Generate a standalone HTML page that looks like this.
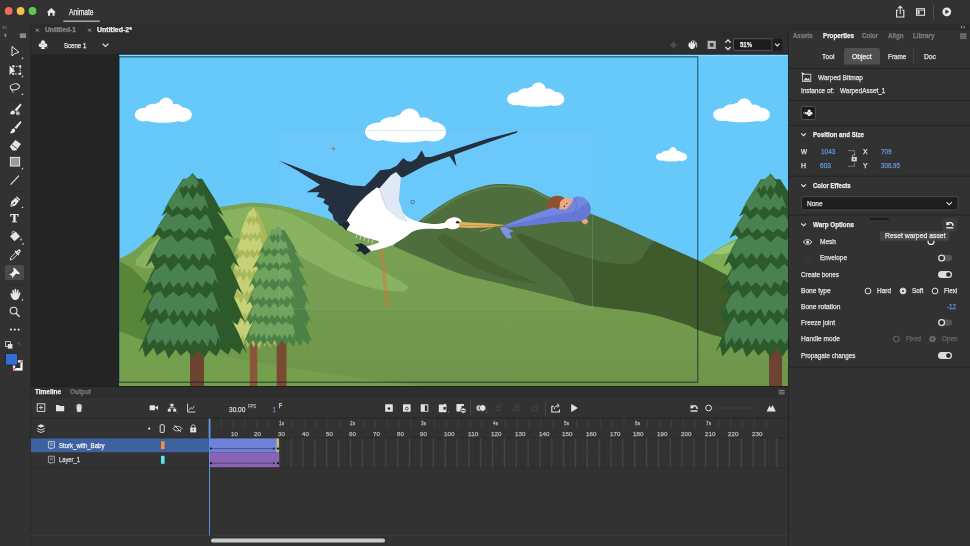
<!DOCTYPE html><html><head><meta charset="utf-8"><title>Animate</title><style>
*{box-sizing:border-box}
html,body{margin:0;padding:0}
body{width:970px;height:546px;position:relative;overflow:hidden;background:#323232;font-family:"Liberation Sans",sans-serif;}
.p{position:absolute}
.t{position:absolute;white-space:nowrap;line-height:12px;height:12px;transform-origin:0 50%;-webkit-text-stroke:0.25px currentColor;}
#txt{position:absolute;left:0;top:0;width:970px;height:546px;will-change:transform;}
svg{position:absolute;left:0;top:0}
</style></head><body>
<div class="p" style="left:0px;top:0px;width:970px;height:24px;background:#323232;"></div>
<div class="p" style="left:30px;top:24px;width:758px;height:12px;background:#2d2d2d;"></div>
<div class="p" style="left:30px;top:36px;width:758px;height:18px;background:#2e2e2e;border-top:1px solid #2a2a2a;"></div>
<div class="p" style="left:30px;top:53.5px;width:758px;height:332.5px;background:#242424;"></div>
<div class="p" style="left:0px;top:24px;width:31.4px;height:522px;background:#323232;border-right:1.8px solid #272727;"></div>
<div class="p" style="left:788px;top:24px;width:182px;height:522px;background:#323232;border-left:1px solid #262626;"></div>
<div class="p" style="left:31px;top:385.6px;width:757px;height:160.4px;background:#323232;border-top:1.2px solid #1f1f1f;"></div>
<div class="p" style="left:31px;top:386.8px;width:757px;height:11.6px;background:#2e2e2e;"></div>
<svg width="970" height="546" viewBox="0 0 970 546"><defs><clipPath id="artclip"><rect x="119.3" y="54.7" width="668.7" height="331.2"/></clipPath><linearGradient id="gnd" x1="0" y1="0" x2="0" y2="1"><stop offset="0" stop-color="#78a24f"/><stop offset="1" stop-color="#6f954a"/></linearGradient></defs>
<g clip-path="url(#artclip)">
<rect x="119" y="54" width="669" height="333" fill="#67c8fa"/>
<g fill="#ffffff">
<ellipse cx="163.2" cy="115.2" rx="25.1" ry="7.5"/>
<ellipse cx="143.8" cy="114.7" rx="9.1" ry="6.8"/>
<ellipse cx="182.7" cy="114.7" rx="9.1" ry="7.3"/>
<ellipse cx="153.5" cy="111.6" rx="9.7" ry="7.8"/>
<ellipse cx="166.1" cy="106.6" rx="7.7" ry="9.1"/>
<ellipse cx="175.8" cy="111.6" rx="8.0" ry="7.5"/>
<ellipse cx="160.4" cy="110.0" rx="8.0" ry="7.8"/>
</g>
<g fill="#ffffff">
<ellipse cx="405.5" cy="132.4" rx="35.6" ry="10.2"/>
<ellipse cx="378.0" cy="131.7" rx="13.0" ry="9.2"/>
<ellipse cx="433.0" cy="131.7" rx="13.0" ry="9.9"/>
<ellipse cx="391.7" cy="127.5" rx="13.8" ry="10.6"/>
<ellipse cx="409.6" cy="120.8" rx="10.9" ry="12.4"/>
<ellipse cx="423.3" cy="127.5" rx="11.3" ry="10.2"/>
<ellipse cx="401.4" cy="125.3" rx="11.3" ry="10.6"/>
</g>
<g fill="#ffffff">
<ellipse cx="535.6" cy="99.4" rx="25.2" ry="7.3"/>
<ellipse cx="516.2" cy="98.9" rx="9.2" ry="6.6"/>
<ellipse cx="555.1" cy="98.9" rx="9.2" ry="7.1"/>
<ellipse cx="525.9" cy="95.9" rx="9.7" ry="7.6"/>
<ellipse cx="538.5" cy="91.1" rx="7.7" ry="8.9"/>
<ellipse cx="548.3" cy="95.9" rx="8.0" ry="7.3"/>
<ellipse cx="532.8" cy="94.3" rx="8.0" ry="7.6"/>
</g>
<g fill="#ffffff">
<ellipse cx="671.5" cy="157.2" rx="13.6" ry="4.2"/>
<ellipse cx="661.0" cy="156.9" rx="5.0" ry="3.8"/>
<ellipse cx="682.0" cy="156.9" rx="5.0" ry="4.1"/>
<ellipse cx="666.2" cy="155.1" rx="5.3" ry="4.3"/>
<ellipse cx="673.0" cy="152.4" rx="4.2" ry="5.1"/>
<ellipse cx="678.3" cy="155.1" rx="4.3" ry="4.2"/>
<ellipse cx="670.0" cy="154.2" rx="4.3" ry="4.3"/>
</g>
<g fill="#ffffff">
<ellipse cx="741.5" cy="115.1" rx="25.1" ry="7.2"/>
<ellipse cx="722.1" cy="114.6" rx="9.1" ry="6.4"/>
<ellipse cx="760.9" cy="114.6" rx="9.1" ry="6.9"/>
<ellipse cx="731.8" cy="111.6" rx="9.7" ry="7.4"/>
<ellipse cx="744.4" cy="106.9" rx="7.7" ry="8.7"/>
<ellipse cx="754.0" cy="111.6" rx="8.0" ry="7.2"/>
<ellipse cx="738.6" cy="110.1" rx="8.0" ry="7.4"/>
</g>
<path d="M690,270 C705,258 715,250 730,242 C750,232 770,226 790,224 L790,385 L690,385Z" fill="#7fae56"/>
<path d="M712,254 C722,246 736,240 750,238 C745,248 730,256 712,254Z" fill="#9ac86f"/>
<path d="M392.0,247.0 C393.3,245.7 394.8,243.8 400.0,239.0 C405.2,234.2 413.7,225.1 423.0,218.0 C432.3,210.9 446.1,201.8 456.0,196.5 C465.9,191.2 474.7,188.6 482.4,186.5 C490.1,184.4 494.3,183.9 502.0,184.0 C509.7,184.1 520.9,184.9 528.6,187.0 C536.3,189.1 537.7,191.9 548.4,196.5 C559.1,201.1 580.9,209.7 593.0,214.6 C605.1,219.5 610.8,221.6 621.0,226.0 C631.2,230.4 641.1,235.2 654.0,241.0 C666.9,246.8 684.3,254.0 698.6,260.8 C712.9,267.6 724.8,274.6 740.0,282.0 C755.2,289.4 781.7,301.2 790.0,305.0 L790,385 L392,385Z" fill="#4b6b3a"/>
<path d="M423.0,220.2 C428.5,216.6 446.1,203.9 456.0,198.7 C465.9,193.4 474.7,190.8 482.4,188.7 C490.1,186.6 494.3,186.1 502.0,186.2 C509.7,186.3 520.9,187.1 528.6,189.2 C536.3,191.3 545.1,197.1 548.4,198.7" fill="none" stroke="#5e8348" stroke-width="1.5" stroke-linecap="round"/>
<path d="M644,254 L654,241 L698.6,260.8 L740,282 L790,305 L790,385 L560,385 L575,302 C572,292 566,285 561.6,279 C552,270 545,265 538.5,259 C530,251 522,243 515.4,234.4 L522,233.7 C530,237 538,240 545,242.7 C556,247 566,251 575,254 C585,257 594,260 601,261.5 C614,264 626,265 634,263.4 C640,261 643,258 644,254Z" fill="#3f5b2c"/>
<path d="M437,238 C448,252 470,268 500,277 C515,281 528,283 540,284 C522,276 500,268 480,255 C466,246 452,238 445,233Z" fill="#43602f"/>
<path d="M392,249 C420,262 460,276 520,291 L560,300 L560,385 L392,385Z" fill="#43602f"/>
<path d="M119.0,259.0 C121.7,257.5 128.6,254.6 135.0,250.0 C141.4,245.4 146.8,237.7 157.6,231.4 C168.4,225.1 186.3,216.6 200.0,212.0 C213.7,207.4 230.3,205.5 240.0,204.0 C249.7,202.5 251.3,202.8 258.0,203.0 C264.7,203.2 273.0,204.3 280.0,205.5 C287.0,206.7 291.6,208.1 300.0,210.4 C308.4,212.7 323.3,217.0 330.4,219.5 C337.5,222.0 336.7,223.2 342.5,225.5 C348.3,227.8 356.6,230.1 365.0,233.5 C373.4,236.9 383.3,241.8 393.0,246.0 C402.7,250.2 412.5,254.6 423.0,259.0 C433.5,263.4 445.0,268.7 456.0,272.4 C467.0,276.1 478.0,278.2 489.0,281.0 C500.0,283.8 511.0,286.3 522.0,289.0 C533.0,291.7 544.0,294.3 555.0,297.0 C566.0,299.7 577.0,303.3 588.0,305.4 C599.0,307.5 610.0,308.0 621.0,309.6 C632.0,311.2 643.0,312.4 654.0,315.0 C665.0,317.6 679.7,322.5 687.0,325.0 C694.3,327.5 692.3,328.0 698.0,330.0 C703.7,332.0 710.7,334.5 721.0,337.0 C731.3,339.5 748.5,342.8 760.0,345.0 C771.5,347.2 785.0,349.2 790.0,350.0 L790,386 L119,386Z" fill="url(#gnd)"/>
<path d="M136.0,259.0 C140.0,255.3 149.3,244.0 160.0,237.0 C170.7,230.0 186.7,221.8 200.0,217.0 C213.3,212.2 230.3,209.7 240.0,208.0 C249.7,206.3 251.3,206.7 258.0,207.0 C264.7,207.3 273.0,208.2 280.0,210.0 C287.0,211.8 292.5,214.0 300.0,218.0 C307.5,222.0 314.8,227.3 325.0,234.0 C335.2,240.7 348.5,250.2 361.0,258.0 C373.5,265.8 392.0,276.2 400.0,281.0 C408.0,285.8 407.5,286.0 409.0,287.0 L405.0,291.0 C403.7,291.1 402.2,291.9 397.0,291.5 C391.8,291.1 383.3,290.8 374.0,288.5 C364.7,286.2 350.9,281.7 341.0,277.7 C331.1,273.7 323.9,269.4 314.6,264.5 C305.3,259.6 294.4,252.4 285.0,248.0 C275.6,243.6 268.0,239.3 258.0,238.0 C248.0,236.7 238.0,236.7 225.0,240.0 C212.0,243.3 192.5,253.3 180.0,258.0 C167.5,262.7 157.3,266.8 150.0,268.0 C142.7,269.2 138.3,265.5 136.0,265.0Z" fill="#88b25e"/>
<path d="M119,261 L132,268 L143.4,280 L170,305 L215,340 L215,352 L139,339 L119,331Z" fill="#578639"/>
<path d="M119,331 L139,339 C200,352 300,372 430,387 L119,387Z" fill="#74a04d"/>
<g>
<rect x="249.8" y="329.3" width="7.5" height="57.7" fill="#8a5538"/>
<path d="M239.1,306.0 L267.9,306.0 L275.2,328.6 L279.5,345.1 L277.4,340.8 L276.2,347.0 L272.1,341.3 L270.5,347.8 L266.8,341.4 L264.8,346.7 L261.5,342.9 L259.2,349.3 L256.2,342.6 L253.5,347.6 L250.8,341.3 L247.8,348.2 L245.5,341.4 L242.2,347.9 L240.2,341.4 L236.5,346.4 L234.9,340.8 L230.8,348.0 L229.6,340.2 L227.5,345.1 L231.8,328.6Z" fill="#a9b85b" />
<path d="M240.6,306.0 L260.0,306.0 L264.4,323.8 L267.0,336.6 L265.5,332.0 L264.7,338.8 L261.7,333.8 L260.6,339.7 L258.0,333.5 L256.6,338.9 L254.2,334.9 L252.6,340.8 L250.4,334.3 L248.6,340.4 L246.7,333.6 L244.5,340.3 L242.9,333.4 L240.5,339.2 L239.1,333.2 L236.5,338.8 L235.4,332.4 L232.5,339.4 L231.6,333.0 L230.1,336.6 L234.0,323.8Z" fill="#c6d076" />
<path d="M239.9,284.9 L267.1,284.9 L274.4,306.1 L278.7,321.4 L276.4,317.7 L274.9,322.3 L270.6,317.0 L268.8,323.6 L264.9,318.2 L262.7,323.7 L259.2,318.7 L256.6,324.1 L253.5,319.1 L250.4,324.7 L247.8,318.6 L244.3,325.4 L242.1,318.1 L238.2,325.0 L236.4,317.2 L232.1,324.5 L230.6,316.8 L228.3,321.4 L232.6,306.1Z" fill="#a9b85b" />
<path d="M241.2,284.9 L259.6,284.9 L264.0,301.6 L266.6,313.7 L264.9,310.3 L263.9,316.2 L260.9,309.9 L259.6,317.0 L256.8,311.0 L255.2,316.9 L252.8,311.9 L250.9,317.4 L248.7,311.4 L246.5,316.1 L244.6,312.1 L242.2,317.3 L240.6,310.4 L237.9,314.9 L236.5,310.1 L233.5,315.1 L232.5,310.3 L230.8,313.7 L234.7,301.6Z" fill="#c6d076" />
<path d="M240.8,263.0 L266.2,263.0 L273.3,284.3 L277.4,299.7 L274.8,295.9 L273.1,302.2 L268.7,295.8 L266.5,300.9 L262.6,296.7 L260.0,301.2 L256.5,296.8 L253.5,302.1 L250.5,296.5 L247.0,303.8 L244.4,296.9 L240.5,303.4 L238.3,296.7 L233.9,300.3 L232.2,295.4 L229.6,299.7 L233.7,284.3Z" fill="#a9b85b" />
<path d="M242.0,263.0 L259.2,263.0 L263.5,280.0 L265.9,292.3 L264.1,289.3 L262.8,293.2 L259.8,289.6 L258.2,294.9 L255.5,290.5 L253.6,293.9 L251.1,289.7 L249.0,294.7 L246.8,289.6 L244.3,296.0 L242.5,290.1 L239.7,294.5 L238.1,289.4 L235.1,294.3 L233.8,288.5 L232.0,292.3 L235.7,280.0Z" fill="#c6d076" />
<path d="M242.4,244.7 L264.6,244.7 L271.7,264.5 L275.9,278.9 L273.0,274.4 L270.9,281.2 L266.5,274.7 L263.9,281.6 L260.0,276.1 L257.0,282.6 L253.5,276.6 L250.0,281.3 L247.0,275.2 L243.1,281.6 L240.5,275.4 L236.1,279.4 L234.0,274.7 L231.1,278.9 L235.3,264.5Z" fill="#a9b85b" />
<path d="M243.5,244.7 L258.5,244.7 L262.7,259.9 L265.1,270.9 L263.1,266.9 L261.6,271.5 L258.5,267.8 L256.7,273.9 L253.9,269.2 L251.7,274.2 L249.3,268.8 L246.8,274.4 L244.6,268.8 L241.8,274.1 L240.0,267.6 L236.9,271.5 L235.4,267.8 L233.4,270.9 L237.1,259.9Z" fill="#c6d076" />
<path d="M245.1,228.3 L261.9,228.3 L268.9,244.8 L273.0,256.8 L270.1,253.3 L267.7,259.4 L263.4,254.6 L260.6,258.8 L256.8,254.5 L253.5,258.7 L250.2,254.8 L246.4,258.5 L243.6,254.4 L239.3,258.6 L236.9,253.8 L234.0,256.8 L238.1,244.8Z" fill="#a9b85b" />
<path d="M245.9,228.3 L257.3,228.3 L261.3,241.3 L263.6,250.7 L261.6,248.0 L259.9,252.8 L256.9,249.1 L254.8,252.9 L252.1,248.7 L249.8,252.6 L247.4,249.3 L244.8,253.4 L242.7,248.9 L239.7,251.6 L238.0,247.9 L235.9,250.7 L239.6,241.3Z" fill="#c6d076" />
<path d="M248.9,210.9 L258.1,210.9 L264.5,227.7 L268.3,239.8 L265.6,236.5 L263.2,240.6 L259.5,237.8 L256.7,241.6 L253.5,237.4 L250.3,241.8 L247.5,237.1 L243.8,240.7 L241.4,237.0 L238.7,239.8 L242.5,227.7Z" fill="#a9b85b" />
<path d="M249.4,210.9 L255.6,210.9 L259.1,224.3 L261.2,234.0 L259.3,231.2 L257.6,236.3 L255.0,232.2 L253.0,235.6 L250.7,232.8 L248.4,236.2 L246.4,232.5 L243.8,236.2 L242.1,231.0 L240.2,234.0 L243.6,224.3Z" fill="#c6d076" />
<path d="M253.5,206.5 L253.5,206.5 L258.6,216.4 L261.6,223.5 L259.7,220.8 L257.9,225.0 L255.6,220.8 L253.5,226.3 L251.4,220.8 L249.1,225.2 L247.3,220.9 L245.4,223.5 L248.4,216.4Z" fill="#a9b85b" />
<path d="M253.5,207.2 L253.5,207.2 L256.1,213.0 L257.7,217.2 L256.3,214.7 L255.1,219.8 L253.4,215.6 L252.0,219.3 L250.5,215.5 L248.8,219.0 L247.6,214.6 L246.2,217.2 L248.9,213.0Z" fill="#c6d076" />
</g>
<g>
<rect x="276.7" y="329.9" width="9.8" height="57.1" fill="#7a4a33"/>
<path d="M259.2,310.3 L297.4,310.3 L307.2,329.4 L312.9,343.2 L310.1,339.0 L308.5,345.3 L303.0,339.4 L300.9,346.4 L295.9,339.9 L293.4,346.8 L288.9,341.4 L285.8,345.8 L281.8,340.1 L278.3,346.4 L274.8,340.2 L270.8,344.9 L267.7,340.7 L263.2,345.0 L260.7,340.2 L255.7,345.5 L253.6,340.6 L248.1,344.0 L246.5,339.5 L243.7,343.2 L249.4,329.4Z" fill="#4b8145" />
<path d="M261.1,310.3 L286.9,310.3 L292.8,325.3 L296.3,336.1 L294.3,331.9 L293.1,338.1 L289.3,333.6 L287.8,338.8 L284.3,334.1 L282.4,338.8 L279.2,334.5 L277.1,337.6 L274.2,333.6 L271.7,338.1 L269.2,334.5 L266.4,339.9 L264.2,333.4 L261.0,338.0 L259.2,333.0 L255.7,338.2 L254.2,332.9 L250.3,336.8 L249.2,331.9 L247.2,336.1 L252.3,325.3Z" fill="#70a35e" />
<path d="M260.2,292.6 L296.4,292.6 L306.2,310.4 L311.9,323.3 L308.7,319.4 L306.8,325.9 L301.1,319.7 L298.6,324.8 L293.5,320.9 L290.5,324.9 L285.9,321.5 L282.4,324.8 L278.3,321.4 L274.2,326.1 L270.7,321.7 L266.1,326.1 L263.1,321.0 L258.0,324.8 L255.5,319.8 L249.8,324.7 L247.9,319.9 L244.7,323.3 L250.4,310.4Z" fill="#4b8145" />
<path d="M262.0,292.6 L286.5,292.6 L292.3,306.6 L295.8,316.8 L293.5,313.5 L292.1,318.6 L288.1,314.7 L286.4,319.7 L282.7,315.2 L280.6,319.6 L277.3,314.4 L274.8,318.2 L271.9,314.6 L269.0,318.9 L266.5,314.8 L263.3,318.0 L261.1,315.2 L257.5,318.0 L255.7,313.6 L251.7,317.5 L250.3,313.2 L248.1,316.8 L253.2,306.6Z" fill="#70a35e" />
<path d="M261.3,274.1 L295.3,274.1 L304.6,292.0 L310.1,305.0 L306.7,301.0 L304.3,307.5 L298.6,302.4 L295.6,306.7 L290.5,302.6 L287.0,308.0 L282.4,303.4 L278.3,308.0 L274.2,302.5 L269.6,308.2 L266.1,303.3 L261.0,308.0 L258.0,302.8 L252.3,306.1 L249.9,301.4 L246.5,305.0 L252.0,292.0Z" fill="#4b8145" />
<path d="M263.0,274.1 L285.9,274.1 L291.6,288.4 L294.9,298.8 L292.4,295.2 L290.7,299.8 L286.7,295.8 L284.6,300.8 L280.9,297.0 L278.4,300.7 L275.1,297.4 L272.3,300.3 L269.4,297.5 L266.1,301.4 L263.6,296.2 L259.9,300.0 L257.8,296.9 L253.8,301.2 L252.1,295.7 L249.7,298.8 L254.6,288.4Z" fill="#70a35e" />
<path d="M263.5,258.6 L293.1,258.6 L302.5,275.4 L308.1,287.5 L304.3,283.9 L301.5,288.5 L295.6,284.4 L292.2,290.5 L287.0,285.1 L282.9,289.8 L278.3,285.8 L273.7,291.0 L269.6,285.7 L264.4,289.7 L261.0,284.1 L255.1,288.2 L252.3,283.5 L248.5,287.5 L254.1,275.4Z" fill="#4b8145" />
<path d="M265.0,258.6 L285.0,258.6 L290.5,271.5 L293.8,280.8 L291.1,276.9 L289.1,282.6 L285.0,277.9 L282.5,282.1 L278.8,278.8 L275.9,282.5 L272.6,278.4 L269.4,282.8 L266.5,278.8 L262.8,284.1 L260.3,277.8 L256.2,283.4 L254.2,277.6 L251.5,280.8 L256.5,271.5Z" fill="#70a35e" />
<path d="M267.1,244.8 L289.5,244.8 L298.8,258.7 L304.2,268.8 L300.4,266.1 L297.2,270.6 L291.5,266.8 L287.7,270.3 L282.7,267.2 L278.3,270.2 L273.9,267.2 L268.9,271.6 L265.1,266.2 L259.4,270.4 L256.2,266.1 L252.4,268.8 L257.8,258.7Z" fill="#4b8145" />
<path d="M268.2,244.8 L283.4,244.8 L288.7,255.8 L291.8,263.7 L289.0,261.5 L286.8,264.3 L282.8,262.2 L280.1,266.0 L276.5,261.9 L273.4,265.4 L270.2,262.0 L266.7,266.0 L264.0,261.8 L260.0,265.3 L257.7,261.0 L254.9,263.7 L259.8,255.8Z" fill="#70a35e" />
<path d="M272.2,230.2 L284.4,230.2 L293.0,244.3 L298.0,254.5 L294.4,252.1 L291.2,256.3 L286.3,252.9 L282.6,256.3 L278.3,252.6 L274.0,256.7 L270.3,252.9 L265.4,256.7 L262.2,251.8 L258.6,254.5 L263.6,244.3Z" fill="#4b8145" />
<path d="M272.8,230.2 L281.1,230.2 L285.8,241.5 L288.6,249.7 L286.0,247.4 L283.7,250.2 L280.3,248.1 L277.6,251.1 L274.6,248.2 L271.5,251.4 L268.8,247.8 L265.4,251.3 L263.1,247.2 L260.6,249.7 L265.1,241.5Z" fill="#70a35e" />
<path d="M278.3,226.5 L278.3,226.5 L285.1,234.8 L289.0,240.8 L286.5,238.4 L284.1,242.8 L281.0,238.7 L278.3,243.6 L275.6,239.1 L272.5,243.2 L270.1,237.8 L267.6,240.8 L271.5,234.8Z" fill="#4b8145" />
<path d="M278.3,227.1 L278.3,227.1 L281.8,232.0 L283.9,235.5 L282.1,233.0 L280.4,238.0 L278.2,233.5 L276.3,237.6 L274.3,233.9 L272.1,236.6 L270.4,232.9 L268.6,235.5 L272.2,232.0Z" fill="#70a35e" />
</g>
<g>
<rect x="190.0" y="332.7" width="14.0" height="54.3" fill="#6d4431"/>
<path d="M162.4,302.4 L222.6,302.4 L238.0,331.9 L247.0,353.3 L242.5,347.5 L240.0,354.2 L231.4,347.7 L228.1,354.8 L220.3,348.7 L216.3,356.6 L209.2,350.3 L204.4,357.5 L198.1,350.6 L192.5,357.3 L186.9,350.6 L180.6,355.8 L175.8,349.5 L168.7,358.4 L164.7,349.7 L156.9,355.4 L153.6,347.7 L145.0,357.4 L142.5,346.9 L138.0,353.3 L147.0,331.9Z" fill="#2d5a2a" />
<path d="M165.4,302.4 L206.1,302.4 L215.4,325.6 L220.8,342.3 L217.7,337.0 L215.9,346.2 L209.8,338.7 L207.5,346.7 L201.9,338.9 L199.0,344.7 L194.0,339.8 L190.6,345.7 L186.1,338.5 L182.1,345.3 L178.2,339.1 L173.7,346.9 L170.3,339.3 L165.3,346.2 L162.4,339.4 L156.8,343.8 L154.5,338.4 L148.4,345.2 L146.6,336.9 L143.4,342.3 L151.6,325.6Z" fill="#4a8151" />
<path d="M163.9,275.0 L221.1,275.0 L236.4,302.6 L245.4,322.5 L240.4,317.3 L237.3,325.1 L228.4,318.0 L224.5,324.9 L216.5,317.9 L211.7,326.9 L204.5,319.5 L198.9,326.7 L192.5,319.1 L186.1,327.8 L180.5,318.5 L173.3,325.4 L168.5,317.5 L160.5,324.2 L156.6,318.0 L147.7,325.7 L144.6,317.6 L139.6,322.5 L148.6,302.6Z" fill="#2d5a2a" />
<path d="M166.8,275.0 L205.4,275.0 L214.6,296.7 L220.0,312.5 L216.5,307.4 L214.3,313.0 L208.0,308.1 L205.2,316.3 L199.5,309.0 L196.1,317.2 L191.0,309.9 L187.0,316.9 L182.5,309.5 L177.9,316.5 L173.9,309.6 L168.8,317.1 L165.4,308.2 L159.7,315.3 L156.9,308.1 L150.6,313.1 L148.4,307.0 L144.9,312.5 L153.0,296.7Z" fill="#4a8151" />
<path d="M165.8,246.5 L219.2,246.5 L234.0,274.2 L242.6,294.3 L237.2,288.6 L233.5,298.2 L224.5,289.3 L219.8,296.6 L211.7,290.9 L206.2,298.5 L198.9,292.0 L192.5,297.9 L186.1,291.7 L178.8,296.5 L173.3,291.6 L165.2,298.3 L160.5,290.7 L151.5,295.6 L147.8,289.2 L142.4,294.3 L151.0,274.2Z" fill="#2d5a2a" />
<path d="M168.5,246.5 L204.5,246.5 L213.4,268.6 L218.6,284.6 L214.7,279.2 L212.1,285.5 L205.7,281.0 L202.4,287.8 L196.6,280.9 L192.7,289.1 L187.5,281.2 L183.0,287.6 L178.4,282.1 L173.3,287.7 L169.4,280.9 L163.6,289.1 L160.3,281.6 L153.9,285.8 L151.2,280.4 L147.4,284.6 L155.2,268.6Z" fill="#4a8151" />
<path d="M169.2,222.6 L215.8,222.6 L230.6,248.5 L239.4,267.2 L233.5,262.1 L229.0,269.7 L219.8,262.5 L214.4,269.8 L206.2,264.5 L199.8,270.8 L192.5,263.9 L185.2,271.4 L178.8,262.4 L170.6,271.4 L165.2,262.7 L156.0,270.2 L151.5,261.1 L145.6,267.2 L154.4,248.5Z" fill="#2d5a2a" />
<path d="M171.5,222.6 L203.0,222.6 L211.7,242.5 L216.9,256.8 L212.7,252.7 L209.5,260.6 L203.0,252.4 L199.1,261.5 L193.3,253.1 L188.8,260.3 L183.6,254.1 L178.4,259.3 L173.9,253.4 L168.0,258.7 L164.2,253.9 L157.7,258.3 L154.5,252.5 L150.3,256.8 L158.2,242.5Z" fill="#4a8151" />
<path d="M174.8,201.3 L210.2,201.3 L224.8,222.8 L233.4,238.4 L227.2,234.4 L222.2,239.2 L213.3,236.0 L207.4,240.2 L199.4,236.3 L192.5,241.1 L185.6,236.5 L177.6,242.3 L171.7,235.0 L162.8,239.5 L157.8,234.6 L151.6,238.4 L160.2,222.8Z" fill="#2d5a2a" />
<path d="M176.6,201.3 L200.5,201.3 L208.8,218.2 L213.8,230.5 L209.4,227.0 L205.8,232.2 L199.5,228.3 L195.3,234.1 L189.7,227.5 L184.7,233.4 L179.8,228.3 L174.2,232.2 L169.9,228.4 L163.6,232.1 L160.1,227.1 L155.7,230.5 L163.4,218.2Z" fill="#4a8151" />
<path d="M182.9,178.8 L202.1,178.8 L215.6,200.5 L223.6,216.3 L217.8,211.8 L212.8,217.5 L205.2,214.2 L199.3,220.4 L192.5,213.7 L185.7,218.2 L179.8,213.3 L172.2,217.2 L167.2,212.3 L161.4,216.3 L169.4,200.5Z" fill="#2d5a2a" />
<path d="M183.8,178.8 L196.8,178.8 L204.3,196.2 L208.7,208.8 L204.6,204.6 L201.0,211.8 L195.6,206.1 L191.4,211.0 L186.6,206.9 L181.8,210.7 L177.6,206.0 L172.2,211.0 L168.6,204.9 L164.5,208.8 L171.7,196.2Z" fill="#4a8151" />
<path d="M192.5,173.0 L192.5,173.0 L203.1,185.8 L209.4,195.2 L205.4,191.4 L201.7,196.9 L196.8,191.7 L192.5,199.8 L188.2,191.6 L183.3,198.7 L179.6,190.5 L175.6,195.2 L181.9,185.8Z" fill="#2d5a2a" />
<path d="M192.5,173.9 L192.5,173.9 L198.0,181.5 L201.3,186.9 L198.5,183.0 L195.8,188.7 L192.3,184.5 L189.3,189.7 L186.2,185.3 L182.8,188.2 L180.1,183.7 L177.3,186.9 L182.9,181.5Z" fill="#4a8151" />
</g>
<g>
<rect x="769.0" y="331.9" width="13.0" height="55.1" fill="#6d4431"/>
<path d="M740.1,301.8 L800.9,301.8 L816.4,331.1 L825.5,352.3 L821.0,346.2 L818.5,354.8 L809.8,346.1 L806.5,355.3 L798.5,347.8 L794.5,356.4 L787.3,349.1 L782.5,356.5 L776.1,348.3 L770.5,357.7 L764.9,349.5 L758.5,355.7 L753.7,349.3 L746.5,357.3 L742.5,347.4 L734.5,353.6 L731.2,346.0 L722.5,356.5 L720.0,345.8 L715.5,352.3 L724.6,331.1Z" fill="#2d5a2a" />
<path d="M743.1,301.8 L784.2,301.8 L793.6,324.8 L799.1,341.4 L795.9,335.7 L794.1,342.4 L787.9,337.9 L785.6,344.5 L780.0,338.6 L777.1,343.9 L772.0,338.7 L768.6,343.7 L764.0,338.4 L760.1,345.3 L756.1,337.6 L751.5,345.5 L748.1,337.8 L743.0,345.1 L740.1,337.3 L734.5,344.3 L732.2,337.4 L726.0,345.4 L724.2,334.8 L721.0,341.4 L729.2,324.8Z" fill="#4a8151" />
<path d="M741.7,274.7 L799.3,274.7 L814.8,302.0 L823.9,321.8 L818.9,315.4 L815.7,324.8 L806.8,317.6 L802.8,323.9 L794.7,318.3 L789.9,323.8 L782.6,317.7 L777.0,325.3 L770.5,317.6 L764.0,325.3 L758.4,317.3 L751.1,326.7 L746.3,318.9 L738.2,323.8 L734.2,316.3 L725.3,323.9 L722.1,315.1 L717.1,321.8 L726.2,302.0Z" fill="#2d5a2a" />
<path d="M744.5,274.7 L783.5,274.7 L792.8,296.2 L798.2,311.8 L794.7,307.0 L792.5,312.5 L786.1,307.5 L783.3,315.6 L777.5,308.9 L774.1,313.9 L768.9,309.2 L765.0,317.1 L760.4,308.5 L755.8,314.3 L751.8,309.4 L746.6,314.0 L743.2,309.3 L737.4,315.7 L734.6,308.4 L728.3,314.1 L726.0,306.9 L722.5,311.8 L730.6,296.2Z" fill="#4a8151" />
<path d="M743.5,246.4 L797.5,246.4 L812.4,273.9 L821.1,293.8 L815.7,289.1 L811.9,296.8 L802.8,290.3 L798.1,297.3 L789.9,291.0 L784.3,297.1 L777.0,291.1 L770.5,296.7 L764.0,289.5 L756.7,298.4 L751.1,290.6 L742.9,298.2 L738.2,290.1 L729.1,295.6 L725.3,287.7 L719.9,293.8 L728.6,273.9Z" fill="#2d5a2a" />
<path d="M746.2,246.4 L782.6,246.4 L791.6,268.3 L796.8,284.2 L792.9,279.3 L790.3,285.1 L783.8,279.6 L780.5,286.3 L774.6,281.6 L770.7,288.5 L765.5,281.9 L760.9,287.2 L756.3,282.3 L751.1,286.4 L747.1,281.0 L741.3,286.4 L738.0,280.3 L731.5,285.9 L728.8,279.6 L725.0,284.2 L732.8,268.3Z" fill="#4a8151" />
<path d="M747.0,222.7 L794.0,222.7 L809.0,248.3 L817.8,266.9 L811.9,260.2 L807.3,269.3 L798.1,262.3 L792.6,271.7 L784.3,263.9 L777.9,269.5 L770.5,262.5 L763.1,272.0 L756.7,263.7 L748.4,269.2 L742.9,261.9 L733.7,271.1 L729.1,262.0 L723.2,266.9 L732.0,248.3Z" fill="#2d5a2a" />
<path d="M749.3,222.7 L781.1,222.7 L789.9,242.4 L795.1,256.6 L790.9,250.7 L787.7,260.3 L781.1,252.6 L777.2,259.7 L771.3,254.3 L766.7,258.9 L761.5,252.8 L756.3,259.6 L751.7,253.1 L745.8,259.2 L741.9,252.2 L735.4,259.4 L732.2,252.1 L727.9,256.6 L735.9,242.4Z" fill="#4a8151" />
<path d="M752.6,201.6 L788.4,201.6 L803.1,222.9 L811.8,238.3 L805.6,234.7 L800.5,241.0 L791.5,235.9 L785.5,240.4 L777.5,235.5 L770.5,242.4 L763.5,235.4 L755.5,240.5 L749.5,234.4 L740.5,239.6 L735.4,235.0 L729.2,238.3 L737.9,222.9Z" fill="#2d5a2a" />
<path d="M754.4,201.6 L778.5,201.6 L787.0,218.4 L792.0,230.5 L787.6,227.2 L783.9,232.4 L777.6,228.5 L773.3,232.4 L767.6,228.5 L762.7,233.7 L757.7,228.9 L752.0,232.9 L747.7,227.2 L741.4,233.7 L737.8,226.6 L733.4,230.5 L741.2,218.4Z" fill="#4a8151" />
<path d="M760.8,179.2 L780.2,179.2 L793.8,200.8 L801.9,216.4 L796.1,212.3 L791.0,218.8 L783.3,214.2 L777.3,218.0 L770.5,214.7 L763.7,220.4 L757.7,213.2 L750.0,219.8 L744.9,213.3 L739.1,216.4 L747.2,200.8Z" fill="#2d5a2a" />
<path d="M761.8,179.2 L774.9,179.2 L782.4,196.5 L786.8,209.0 L782.7,205.4 L779.1,211.0 L773.6,206.3 L769.4,211.3 L764.5,206.2 L759.7,210.7 L755.5,206.5 L750.0,211.6 L746.4,205.0 L742.3,209.0 L749.5,196.5Z" fill="#4a8151" />
<path d="M770.5,173.5 L770.5,173.5 L781.2,186.2 L787.5,195.5 L783.5,191.0 L779.8,198.7 L774.8,192.0 L770.5,199.9 L766.2,192.8 L761.2,198.6 L757.5,190.7 L753.5,195.5 L759.8,186.2Z" fill="#2d5a2a" />
<path d="M770.5,174.4 L770.5,174.4 L776.1,181.9 L779.4,187.3 L776.5,183.2 L773.9,189.6 L770.3,184.5 L767.3,191.4 L764.2,184.8 L760.7,190.2 L758.0,184.0 L755.2,187.3 L760.8,181.9Z" fill="#4a8151" />
</g>
<path d="M366.0,186.0 L380.0,170.3 L389.3,169.5 L397.0,165.6 L403.2,157.9 L407.0,161.0 L411.0,161.8 L416.3,158.7 L421.8,150.2 L425.0,157.0 L431.0,157.1 L457.3,148.6 L488.2,138.6 L517.6,131.1 L516.8,132.7 L488.2,142.4 L454.2,154.8 L456.5,166.4 L449.6,156.3 L426.4,164.8 L403.2,177.2 L397.0,177.2 L385.0,186.0 L372.0,190.0Z" fill="#1f2c3a" />
<path d="M279.0,160.5 L300.0,168.5 L320.3,176.2 L350.5,185.2 L364.6,186.2 L382.7,170.1 L392.0,169.0 L380.0,190.0 L362.0,212.0 L345.5,226.0 L339.5,225.5 L337.5,222.5 L333.8,219.8 L332.5,214.5 L328.0,210.0 L329.0,206.0 L323.2,202.8 L325.0,199.0 L316.6,196.4 L319.5,192.2 L306.6,192.2 L320.0,184.8 L298.0,171.0Z" fill="#1f2c3a" />
<path d="M376.7,187.5 C374.9,188.9 369.7,192.5 366.0,196.0 C362.3,199.5 358.0,203.8 354.6,208.4 C351.2,213.0 346.9,220.2 345.5,223.5 C344.1,226.8 345.8,227.2 346.5,228.5 C347.2,229.8 347.1,230.1 350.0,231.5 C352.9,232.9 359.2,235.3 364.0,237.0 C368.8,238.7 377.7,240.2 379.0,241.5 C380.3,242.8 374.8,244.0 372.0,245.0 C369.2,246.0 363.0,246.4 362.0,247.5 C361.0,248.6 363.7,251.1 366.0,251.5 C368.3,251.9 371.8,251.0 376.0,250.0 C380.2,249.0 386.3,247.5 391.0,245.5 C395.7,243.5 400.3,240.3 404.0,238.0 C407.7,235.7 409.7,233.0 413.0,231.5 C416.3,230.0 419.5,229.4 424.0,229.0 C428.5,228.6 435.8,229.2 440.0,229.0 C444.2,228.8 446.5,227.7 449.0,227.5 C451.5,227.3 453.1,228.4 455.0,228.0 C456.9,227.6 459.7,226.2 460.5,225.0 C461.3,223.8 460.8,221.7 460.0,220.5 C459.2,219.3 457.2,218.1 455.5,217.8 C453.8,217.5 451.5,217.8 450.0,218.5 C448.5,219.2 448.8,221.1 446.5,222.0 C444.2,222.9 440.1,223.9 436.0,224.0 C431.9,224.1 426.2,223.3 422.0,222.5 C417.8,221.7 414.0,220.4 411.0,219.0 C408.0,217.6 406.2,216.3 404.0,214.0 C401.8,211.7 400.0,208.7 398.0,205.0 C396.0,201.3 393.0,194.2 392.0,192.0Z" fill="#ffffff"/>
<path d="M390.8,175.2 L396.0,172.0 L400.9,177.2 L398.8,200.3 L403.0,213.0 L408.5,223.0 L399.5,219.0 L386.5,208.4 L380.5,196.0 L379.7,188.0Z" fill="#e2e9f6" />
<path d="M379.7,189 L386.5,208.4 L399.5,219" stroke="#b9c3d6" stroke-width="0.5" fill="none"/>
<path d="M357,233l-1,5 M361,234.5l-1,5 M365,236l-1,5 M369,237.5l-1,5 M373,239l-1,4.5" stroke="#cfd8e6" stroke-width="0.8" fill="none"/>
<path d="M354.6,244.6 L361.5,243.3 L366.0,246.0 L371.0,251.0 L364.6,255.0 L361.0,251.5 L356.5,251.5 L359.0,248.0Z" fill="#18222e" />
<path d="M341.0,225.0 L347.5,221.0 L350.0,224.5 L346.0,230.5Z" fill="#18222e" />
<path d="M381.8,248.5 C382.5,268 383.5,286 386.3,300 L385.3,308.5 M383,248.5 C384,268 386,286 388,300 L389.3,308" stroke="#c8793f" stroke-width="1" fill="none"/>
<ellipse cx="453.4" cy="223.3" rx="8.6" ry="5.9" fill="#ffffff" transform="rotate(-8 453.4 223.3)"/>
<path d="M458.6,221.8 L470.0,222.4 L490.0,223.6 L506.6,225.2 L490.0,227.2 L470.0,228.0 L459.5,227.6Z" fill="#e0b15a" />
<path d="M460,225.4 L503,225.9" stroke="#a87b33" stroke-width="0.5"/>
<path d="M480.3,231.4 L492.6,227.6" stroke="#c9983f" stroke-width="0.9"/>
<ellipse cx="457.6" cy="222.2" rx="1.7" ry="1.2" fill="#232350"/>
<ellipse cx="566.5" cy="204.6" rx="9" ry="6.6" fill="#e9a685" transform="rotate(-14 566.5 204.6)"/>
<path d="M547.4,207.6 C545.6,200.6 550.4,196 557.4,195.8 C561.2,195.8 563.6,197 564.6,198.6 C560.8,199.8 559.6,202.4 559.8,205.6 C559.6,209.6 556.2,212.4 552.6,211.6 C550,211 548.2,209.6 547.4,207.6Z" fill="#8a4f2e"/>
<circle cx="564.4" cy="206.4" r="0.8" fill="#3a2a3a"/><circle cx="566.8" cy="203.6" r="0.7" fill="#3a2a3a"/>
<path d="M581.0,219.5 L586.5,218.6 L588.4,222.0 L585.4,224.6 L582.4,223.0Z" fill="#e8a27f" />
<path d="M506.0,224.4 L530.0,215.6 L545.2,210.2 L553.0,207.4 L560.0,209.6 L566.0,209.4 L571.0,204.0 L574.0,197.6 L577.0,196.2 L584.0,197.4 L588.6,202.0 L590.8,207.8 L590.0,213.4 L586.4,218.6 L580.4,220.9 L560.0,222.0 L530.0,225.2 L507.0,227.6Z" fill="#7085e0" />
<path d="M545.0,217.0 L575.0,211.5 L588.6,202.0 L590.8,207.8 L590.0,213.4 L586.4,218.6 L580.4,220.9 L560.0,222.0 L530.0,225.2 L507.0,227.6 L506.4,226.0Z" fill="#6176d4" />
<path d="M574,197.6 C578,204 577,212 571,218" stroke="#5468c6" stroke-width="0.7" fill="none"/>
<path d="M499.6,227.6 L505.0,226.4 L509.0,229.0 L514.0,231.2 L509.4,232.8 L512.0,238.0 L507.0,238.6 L503.0,233.6Z" fill="#7c8fe6" />
<rect x="279.5" y="130.5" width="313" height="178.5" fill="#ffffff" fill-opacity="0.025" stroke="#7fb6c8" stroke-opacity="0.4" stroke-width="0.7"/>
<path d="M331,148.7h5M333.5,146.2v5" stroke="#b06a4a" stroke-width="0.7" fill="none"/>
<circle cx="412.6" cy="202" r="1.8" fill="none" stroke="#3c5a78" stroke-width="0.7"/>
</g>
<rect x="118" y="53" width="670" height="1.7" fill="#14303c"/>
<rect x="118.7" y="56.8" width="579" height="325.4" fill="none" stroke="#0c2430" stroke-opacity="0.6" stroke-width="1.3"/>
<path d="M119.3,55.3H788" stroke="#a8e2ff" stroke-opacity="0.7" stroke-width="1.2"/>
</svg>
<svg width="970" height="546" viewBox="0 0 970 546" fill="none">
<circle cx="8.7" cy="11" r="3.9" fill="#ed6a5e"/><circle cx="20.6" cy="11" r="3.9" fill="#f5bf4f"/><circle cx="32.5" cy="11" r="3.9" fill="#61c554"/>
<path d="M46.7,12.2 L51.3,8 L55.9,12.2 L54.6,12.2 L54.6,15.8 L52.5,15.8 L52.5,13 L50.1,13 L50.1,15.8 L48,15.8 L48,12.2Z" fill="#e6e6e6"/>
<rect x="63.3" y="20.6" width="36.5" height="1.1" fill="#cfcfcf"/>
<g stroke="#e6e6e6" stroke-width="1.1"><path d="M898.2,10.3 H896.6 V17 H903.8 V10.3 H902.2"/><path d="M900.2,14 V6.4 M898,8.4 L900.2,6.2 L902.4,8.4"/></g>
<rect x="916.5" y="8.7" width="8" height="6.6" stroke="#e6e6e6" stroke-width="1"/><rect x="917.5" y="10.6" width="2.2" height="3.9" fill="#cfcfcf"/><path d="M916.5,10.2H924.5" stroke="#e6e6e6" stroke-width="0.8"/>
<rect x="933.2" y="5" width="0.9" height="14.5" fill="#555"/>
<circle cx="946.8" cy="11.8" r="4.4" fill="#e6e6e6"/><path d="M945.4,9.5 L949.3,11.8 L945.4,14.1Z" fill="#323232"/>
<path d="M35.9,28.7 l3,3 m0,-3 l-3,3" stroke="#bdbdbd" stroke-width="0.8"/>
<path d="M88.1,28.7 l3,3 m0,-3 l-3,3" stroke="#bdbdbd" stroke-width="0.8"/>
<g fill="#e6e6e6"><circle cx="43.00" cy="42.25" r="2.05"/><circle cx="40.74" cy="45.32" r="2.05"/><circle cx="45.26" cy="45.32" r="2.05"/><path d="M43.00,43.78 l2.05,5.12 h-4.10Z"/></g>
<path d="M46.5,48.2 l1.2,-1.2 v1.2Z" fill="#ccc"/>
<path d="M102.6,43.6 L105.5,46.4 L108.4,43.6" stroke="#e6e6e6" stroke-width="1.2"/>
<g stroke="#5e5e5e" stroke-width="0.7"><circle cx="673.4" cy="45" r="2"/><path d="M673.4,41.6v6.8M670,45h6.8"/></g>
<path d="M688.6,46.5 C688,44 689,42.2 690.2,42.2 L690.6,44.3 L690.9,41.3 C691.5,40.8 692.2,41 692.2,41.8 L692.4,44 L693,41.6 C693.7,41.2 694.3,41.6 694.2,42.4 L693.9,44.6 L695,42.9 C695.8,42.8 696,43.4 695.8,44 L694.6,47.6 C694,49 692.3,49.4 690.9,48.9Z" fill="#e6e6e6"/>
<path d="M692.6,40.6 C696,41 697.6,44 696.4,47.4" stroke="#d9d9d9" stroke-width="0.9"/>
<rect x="707.6" y="40.8" width="8.2" height="8.2" fill="#b4b4b4"/><rect x="709.9" y="43.1" width="3.6" height="3.6" fill="#3a3a3a"/>
<path d="M725.4,42.6 L728,40 L730.6,42.6 M725.4,47 L728,49.6 L730.6,47" stroke="#e6e6e6" stroke-width="1.25"/>
<rect x="733.5" y="38.8" width="38.5" height="11.6" rx="1.5" fill="#1c1c1c" stroke="#5a5a5a" stroke-width="0.9"/>
<rect x="772.5" y="38.8" width="9.6" height="11.6" rx="1.5" fill="#1c1c1c"/>
<path d="M775,43.6 L777.3,45.9 L779.6,43.6" stroke="#e6e6e6" stroke-width="1.1"/>
<path d="M4,26.2 l-1.3,1.3 l1.3,1.3 M6.4,26.2 l-1.3,1.3 l1.3,1.3" stroke="#bbb" stroke-width="0.6"/>
<rect x="4.6" y="33.8" width="1.6" height="3" fill="#999"/><rect x="19.8" y="33.4" width="6.2" height="4.6" fill="#8a8a8a"/>
<path d="M12,46.5 L12,56 L14.4,53.8 L19,52.2Z" stroke="#e6e6e6" stroke-width="1"/>
<path d="M21.3,58.8 l1.8,-1.8 v1.8Z" fill="#f0f0f0"/>
<path d="M9.6,65.5 V75 L12.3,72.3 L15.2,71.2Z" fill="#e6e6e6"/>
<rect x="13.2" y="66.3" width="7" height="7.6" stroke="#e6e6e6" stroke-width="0.9" stroke-dasharray="1.6 1"/>
<g fill="#e6e6e6"><rect x="12.2" y="65.3" width="2" height="2"/><rect x="19.2" y="65.3" width="2" height="2"/><rect x="19.2" y="72.9" width="2" height="2"/><rect x="12.2" y="72.9" width="2" height="2"/></g>
<path d="M21.3,77.3 l1.8,-1.8 v1.8Z" fill="#f0f0f0"/>
<ellipse cx="14.8" cy="86.8" rx="4.6" ry="3" stroke="#e6e6e6" stroke-width="1" transform="rotate(-12 14.8 86.8)"/><path d="M12.2,89.4 C11.6,91 12.6,92 13.4,92.8" stroke="#e6e6e6" stroke-width="0.9"/>
<path d="M21.3,95 l1.8,-1.8 v1.8Z" fill="#f0f0f0"/>
<rect x="6" y="100" width="18" height="0.9" fill="#2a2a2a"/>
<path d="M20.4,103.6 L21.6,104.8 L16.6,111.4 L14.6,109.8Z" fill="#e6e6e6"/><path d="M10.2,114 C10.4,111.6 12.2,110 14,110.8 C15.6,111.8 15.2,114 13.2,114.4 C12,114.6 11,114.4 10.2,114Z" fill="#e6e6e6"/><circle cx="17.8" cy="113.2" r="2" fill="#b8b8b8"/>
<path d="M20.4,121 L21.6,122.2 L16.4,129 L14.4,127.4Z" fill="#e6e6e6"/><path d="M9.8,133 C11.2,132.4 11.2,130 12.6,128.8 C14.2,127.8 15.8,129.4 15,131.2 C14,133.2 11.6,133.6 9.8,133Z" fill="#e6e6e6"/>
<path d="M9.8,146.6 L15.4,140 L21,144 L16.2,150.4 L12.4,150.4Z" fill="#e6e6e6"/><path d="M11.8,144.6 L17.2,148.8" stroke="#323232" stroke-width="0.9"/>
<rect x="10.4" y="157.4" width="9.2" height="8.6" fill="#9a9a9a" stroke="#e6e6e6" stroke-width="1"/>
<path d="M21.3,169.3 l1.8,-1.8 v1.8Z" fill="#f0f0f0"/>
<path d="M10.6,184.6 L19,175.6" stroke="#e6e6e6" stroke-width="1.1"/>
<rect x="6" y="191.3" width="18" height="0.9" fill="#2a2a2a"/>
<path d="M10.2,207 L11.4,201.6 L15.6,197.8 L19,201 L15.4,205.6Z" fill="#e6e6e6"/><path d="M10.6,206.6 L14,203.2" stroke="#323232" stroke-width="0.7"/><circle cx="14.4" cy="202.8" r="0.9" fill="#323232"/><path d="M16.4,196.8 L19.8,200" stroke="#e6e6e6" stroke-width="1.2"/>
<path d="M21.3,208 l1.8,-1.8 v1.8Z" fill="#f0f0f0"/>
<path d="M10,236.2 L15.6,231.6 L20,236.6 L14.4,241.2Z" fill="#e6e6e6"/><path d="M12.2,233.8 C11.6,231.6 13.6,230.4 14.6,232" stroke="#e6e6e6" stroke-width="0.9"/><path d="M21,238 C21.8,239.4 22,240.4 21,240.6 C20,240.4 20.2,239.4 21,238Z" fill="#e6e6e6"/>
<path d="M21.8,244.6 l1.8,-1.8 v1.8Z" fill="#f0f0f0"/>
<path d="M10.2,260 L10.8,257.4 L15.6,252.6 L17.4,254.4 L12.6,259.2Z" stroke="#e6e6e6" stroke-width="0.9"/><path d="M15,251 L19,255 M16.4,252.4 L18.4,250.2 C19.4,249.4 20.6,250.6 19.8,251.6 L17.8,253.8" stroke="#e6e6e6" stroke-width="1.3"/>
<rect x="5" y="265" width="19" height="15" rx="2" fill="#4b4b4b"/>
<path d="M14.4,267.8 L20,273.4 L18.8,274.2 L16.2,273.6 L13.4,276.4 L12.8,278.6 L11.8,275.6 L9.4,278 L11.6,275.2 L8.8,274.4 L11,273.8 L13.8,271 L13.2,268.6Z" fill="#f2f2f2"/>
<rect x="6" y="284.3" width="18" height="0.9" fill="#2a2a2a"/>
<path d="M11.6,297.4 C10.8,295.4 10,293.6 10.8,293.2 C11.6,292.8 12.2,294 12.8,295 L12.2,290.4 C12.2,289.4 13.6,289.4 13.8,290.4 L14.4,293.6 L14.6,289.4 C14.8,288.4 16.2,288.6 16.2,289.6 L16.4,293.6 L17.2,290.2 C17.6,289.4 18.8,289.8 18.6,290.8 L18.2,294.4 L19.2,292.6 C19.8,292 20.8,292.6 20.4,293.6 L19,297.6 C18.4,299.2 17.2,300 15.6,300 C13.8,300 12.4,299 11.6,297.4Z" fill="#e6e6e6"/>
<path d="M21.3,300.6 l1.8,-1.8 v1.8Z" fill="#f0f0f0"/>
<circle cx="13.6" cy="310.6" r="3.4" stroke="#e6e6e6" stroke-width="1.1"/><path d="M16,313.2 L19.6,316.8" stroke="#e6e6e6" stroke-width="1.4"/>
<g fill="#e6e6e6"><circle cx="11" cy="329.6" r="1.05"/><circle cx="14.8" cy="329.6" r="1.05"/><circle cx="18.6" cy="329.6" r="1.05"/></g>
<rect x="5.4" y="341.6" width="5" height="5" fill="#323232" stroke="#ddd" stroke-width="0.8"/><rect x="7.8" y="344" width="4.6" height="4.6" fill="#ddd"/>
<path d="M17.4,343.4 C19.6,342.8 21,344.2 20.8,346.6 M17.4,343.4 l1.4,-1 M17.4,343.4 l1.2,1.2" stroke="#5a5a5a" stroke-width="0.7"/>
<rect x="13.2" y="360.6" width="9" height="9.6" fill="#f4f4f4" stroke="#f4f4f4" stroke-width="0.6"/><rect x="15.4" y="362.8" width="4.8" height="5.2" fill="#323232"/><path d="M13.2,370.2 L22.2,360.6" stroke="#e0392b" stroke-width="1.1"/><rect x="15.4" y="362.8" width="4.8" height="5.2" fill="#323232"/>
<rect x="5.6" y="353.4" width="12" height="11.6" fill="#2f6fd6" stroke="#222" stroke-width="0.8"/>
<path d="M960.8,25.8 l1.3,1.3 l-1.3,1.3 M963.4,25.8 l1.3,1.3 l-1.3,1.3" stroke="#ccc" stroke-width="0.7"/>
<g fill="#8f8f8f"><rect x="960" y="33.6" width="6.4" height="1.1"/><rect x="960" y="35.6" width="6.4" height="1.1"/><rect x="960" y="37.6" width="6.4" height="1.1"/></g>
<rect x="788" y="24" width="182" height="7" fill="#2c2c2c"/>
<path d="M960.8,25.8 l1.3,1.3 l-1.3,1.3 M963.4,25.8 l1.3,1.3 l-1.3,1.3" stroke="#ccc" stroke-width="0.7"/>
<rect x="844" y="48" width="36" height="16.4" rx="2.5" fill="#505050"/>
<rect x="913.2" y="49" width="0.9" height="14.5" fill="#4a4a4a"/>
<rect x="789.0" y="67.9" width="181.0" height="1.2" fill="#262626"/>
<rect x="789.0" y="99.9" width="181.0" height="1.2" fill="#262626"/>
<rect x="789.0" y="124.8" width="181.0" height="1.2" fill="#262626"/>
<rect x="789.0" y="175.6" width="181.0" height="1.2" fill="#262626"/>
<rect x="789.0" y="214.4" width="181.0" height="1.2" fill="#262626"/>
<rect x="789.0" y="366.4" width="181.0" height="1.2" fill="#262626"/>
<rect x="802.6" y="74.2" width="8.2" height="7.2" stroke="#d8d8d8" stroke-width="0.9"/><path d="M803.4,80.6 L806,77.6 L807.6,79.2 L808.8,78 L810.2,80.6Z" fill="#d8d8d8"/><path d="M801.2,72.2 L804.6,73.4 L803.4,74.4 L802.4,75.6Z" fill="#e6e6e6"/>
<rect x="801.2" y="106.5" width="14.2" height="13" rx="1.8" fill="#1d1d1d" stroke="#5c5c5c" stroke-width="0.8"/>
<g fill="#eeeeee"><circle cx="809.20" cy="110.97" r="1.55"/><circle cx="807.50" cy="113.30" r="1.55"/><circle cx="810.91" cy="113.30" r="1.55"/><path d="M809.20,112.13 l1.55,3.88 h-3.10Z"/></g>
<path d="M803,113 h3 m-1.2,-1.2 l1.2,1.2 l-1.2,1.2" stroke="#eee" stroke-width="0.7"/>
<path d="M801.3,133.3 L803.6,135.6 L805.9,133.3" stroke="#e4e4e4" stroke-width="1.1"/>
<path d="M801.3,184.3 L803.6,186.6 L805.9,184.3" stroke="#e4e4e4" stroke-width="1.1"/>
<path d="M801.3,223.5 L803.6,225.8 L805.9,223.5" stroke="#e4e4e4" stroke-width="1.1"/>
<path d="M848,150.6 H854.6 V155 M848,166.2 H854.6 V163" stroke="#8a8a8a" stroke-width="0.8"/>
<rect x="851.6" y="157" width="5.2" height="4.4" fill="#d6d6d6"/><path d="M852.6,157 V155.8 C852.6,154.2 855,154.2 855,155.4" stroke="#d6d6d6" stroke-width="0.8"/><rect x="853.6" y="158.4" width="1.2" height="1.6" fill="#323232"/>
<rect x="801.4" y="196.6" width="156.6" height="13.4" rx="2" fill="#1e1e1e" stroke="#4e4e4e" stroke-width="0.9"/>
<path d="M946.5,202.2 L949.2,204.8 L951.9,202.2" stroke="#e4e4e4" stroke-width="1.1"/>
<rect x="870" y="218.2" width="19" height="1.5" rx="0.7" fill="#141414"/>
<rect x="942" y="218" width="15.2" height="14" rx="1.5" fill="#3b3b3b"/>
<path d="M947.6,223.6 C950.3,221.2 953.4,223.2 953.0,226.0" stroke="#ececec" stroke-width="1.45"/>
<path d="M946.6,221.4 l-0.5,3.8 l3.8,-0.4Z" fill="#ececec"/>
<rect x="946.3" y="227.1" width="7" height="1.4" fill="#ececec"/>
<path d="M803.4,242 C805.4,238.8 809.8,238.8 811.8,242 C809.8,245.2 805.4,245.2 803.4,242Z" stroke="#e4e4e4" stroke-width="0.9"/><circle cx="807.6" cy="242" r="1.5" fill="#e4e4e4"/>
<path d="M804,258 C805.6,255.6 809.4,255.6 811,258 C809.4,260.4 805.6,260.4 804,258Z" stroke="#3e3e3e" stroke-width="0.8"/>
<circle cx="931" cy="241.4" r="3" stroke="#e0e0e0" stroke-width="1.2"/>
<rect x="938.6" y="254.8" width="13.4" height="6.4" rx="3.2" fill="#565656"/><circle cx="941.6" cy="258.0" r="2.9" fill="#2e2e2e" stroke="#e0e0e0" stroke-width="1.25"/>
<rect x="938.0" y="271.0" width="14" height="7" rx="3.5" fill="#dcdcdc"/><circle cx="948.4" cy="274.5" r="2.3" fill="#2c2c2c"/>
<rect x="938.6" y="319.4" width="13.4" height="6.4" rx="3.2" fill="#565656"/><circle cx="941.6" cy="322.6" r="2.9" fill="#2e2e2e" stroke="#e0e0e0" stroke-width="1.25"/>
<rect x="938.0" y="352.1" width="14" height="7" rx="3.5" fill="#dcdcdc"/><circle cx="948.4" cy="355.6" r="2.3" fill="#2c2c2c"/>
<rect x="880" y="231.4" width="69" height="9.4" fill="#444444"/>
<circle cx="868.0" cy="291.0" r="2.9" stroke="#e0e0e0" stroke-width="1"/>
<circle cx="903.0" cy="291.0" r="2.9" stroke="#e0e0e0" stroke-width="1"/>
<circle cx="903.0" cy="291.0" r="2.6" fill="#e0e0e0"/><circle cx="903.0" cy="291.0" r="1" fill="#323232"/>
<circle cx="935.0" cy="291.0" r="2.9" stroke="#e0e0e0" stroke-width="1"/>
<circle cx="896.3" cy="339.0" r="2.9" stroke="#6a6a6a" stroke-width="1"/>
<circle cx="932.5" cy="339.0" r="2.9" stroke="#6a6a6a" stroke-width="1"/>
<circle cx="932.5" cy="339.0" r="2.6" fill="#6a6a6a"/><circle cx="932.5" cy="339.0" r="1" fill="#323232"/>
<rect x="30.0" y="417.5" width="758.0" height="1.0" fill="#272727"/>
<rect x="30.0" y="437.6" width="758.0" height="0.8" fill="#2a2a2a"/>
<rect x="30.0" y="467.0" width="758.0" height="0.8" fill="#292929"/>
<rect x="30.0" y="535.1" width="758.0" height="0.9" fill="#3c3c3c"/>
<g fill="#8a8a8a"><rect x="778.6" y="389.8" width="6" height="1"/><rect x="778.6" y="391.6" width="6" height="1"/><rect x="778.6" y="393.4" width="6" height="1"/></g>
<rect x="37.2" y="403.8" width="7.6" height="7.6" stroke="#e2e2e2" stroke-width="0.9"/><path d="M41,405.6v4M39,407.6h4" stroke="#e2e2e2" stroke-width="0.9"/>
<path d="M56,405 H59 L60,406 H64.2 V411.2 H56Z" fill="#e2e2e2"/>
<path d="M76.2,405.6 H82 M77.8,405.4 V404.4 H80.4 V405.4 M76.9,406.6 L77.4,411.6 H80.8 L81.3,406.6Z" stroke="#e2e2e2" stroke-width="0.9" fill="#e2e2e2"/>
<rect x="149.6" y="405.2" width="5.4" height="5" rx="0.6" fill="#e2e2e2"/><path d="M155,407.6 L158,405.6 V410 Z" fill="#e2e2e2"/>
<g fill="#e2e2e2"><rect x="170.4" y="403.8" width="3" height="2.6"/><rect x="167.8" y="409" width="3" height="2.6"/><rect x="173.2" y="409" width="3" height="2.6"/></g><path d="M171.9,406.4V407.8H169.3V409M171.9,407.8H174.7V409" stroke="#e2e2e2" stroke-width="0.7"/>
<path d="M176.6,412.6 l1.1,-1.1 v1.1Z" fill="#ccc"/>
<path d="M187.6,403.6 V412 H195.4" stroke="#e2e2e2" stroke-width="0.9"/><path d="M188.8,410.4 L191,407.6 L192.4,408.8 L194.4,406" stroke="#e2e2e2" stroke-width="0.8"/>
<path d="M37.2,426 L41,424.2 L44.8,426 L41,427.8Z" fill="#e2e2e2"/><path d="M37.2,428.4 L41,430.2 L44.8,428.4 M37.2,430.8 L41,432.6 L44.8,430.8" stroke="#e2e2e2" stroke-width="0.9"/>
<circle cx="149.2" cy="428.6" r="1.1" fill="#e2e2e2"/>
<rect x="160.2" y="424.8" width="4" height="7.6" rx="0.6" stroke="#e2e2e2" stroke-width="1"/>
<path d="M173,428.6 C174.8,425.6 180,425.6 182,428.6 C180,431.6 174.8,431.6 173,428.6Z" stroke="#e2e2e2" stroke-width="0.8"/><path d="M174.2,425 L181,432.2" stroke="#e2e2e2" stroke-width="0.9"/>
<rect x="190.2" y="427.6" width="6" height="4.8" fill="#e2e2e2"/><path d="M191.4,427.6 V426.4 C191.4,424.4 195,424.4 195,426.4 V427.6" stroke="#e2e2e2" stroke-width="0.9"/><rect x="192.7" y="429" width="1" height="1.6" fill="#323232"/>
<rect x="30.8" y="438.4" width="178.4" height="13.8" fill="#3d629f"/>
<path d="M48.4,441.6 h6 v6.4 h-2.2 l-1.6,1.2 v-1.2 h-2.2Z" stroke="#d6dbe6" stroke-width="0.8"/><path d="M49.9,443.6 h3 M49.9,445.2 h3" stroke="#d6dbe6" stroke-width="0.6"/>
<path d="M48.4,456.2 h6 v6.4 h-2.2 l-1.6,1.2 v-1.2 h-2.2Z" stroke="#bdbdbd" stroke-width="0.8"/><path d="M49.9,458.2 h3 M49.9,459.8 h3" stroke="#bdbdbd" stroke-width="0.6"/>
<rect x="161" y="441.2" width="3.6" height="8" fill="#f0913a"/><rect x="161" y="455.8" width="3.6" height="8" fill="#58e6ea"/>
<rect x="209" y="438.4" width="567" height="29" fill="#303030"/>
<rect x="219.38" y="438.4" width="1.47" height="29" fill="#444444"/><rect x="231.22" y="438.4" width="1.47" height="29" fill="#444444"/><rect x="243.07" y="438.4" width="1.47" height="29" fill="#444444"/><rect x="254.91" y="438.4" width="1.47" height="29" fill="#444444"/><rect x="266.76" y="438.4" width="1.47" height="29" fill="#444444"/><rect x="278.60" y="438.4" width="1.47" height="29" fill="#444444"/><rect x="290.45" y="438.4" width="1.47" height="29" fill="#444444"/><rect x="302.29" y="438.4" width="1.47" height="29" fill="#444444"/><rect x="314.14" y="438.4" width="1.47" height="29" fill="#444444"/><rect x="325.98" y="438.4" width="1.47" height="29" fill="#444444"/><rect x="337.83" y="438.4" width="1.47" height="29" fill="#444444"/><rect x="349.67" y="438.4" width="1.47" height="29" fill="#444444"/><rect x="361.52" y="438.4" width="1.47" height="29" fill="#444444"/><rect x="373.36" y="438.4" width="1.47" height="29" fill="#444444"/><rect x="385.21" y="438.4" width="1.47" height="29" fill="#444444"/><rect x="397.05" y="438.4" width="1.47" height="29" fill="#444444"/><rect x="408.90" y="438.4" width="1.47" height="29" fill="#444444"/><rect x="420.74" y="438.4" width="1.47" height="29" fill="#444444"/><rect x="432.59" y="438.4" width="1.47" height="29" fill="#444444"/><rect x="444.43" y="438.4" width="1.47" height="29" fill="#444444"/><rect x="456.28" y="438.4" width="1.47" height="29" fill="#444444"/><rect x="468.12" y="438.4" width="1.47" height="29" fill="#444444"/><rect x="479.97" y="438.4" width="1.47" height="29" fill="#444444"/><rect x="491.81" y="438.4" width="1.47" height="29" fill="#444444"/><rect x="503.66" y="438.4" width="1.47" height="29" fill="#444444"/><rect x="515.50" y="438.4" width="1.47" height="29" fill="#444444"/><rect x="527.35" y="438.4" width="1.47" height="29" fill="#444444"/><rect x="539.19" y="438.4" width="1.47" height="29" fill="#444444"/><rect x="551.04" y="438.4" width="1.47" height="29" fill="#444444"/><rect x="562.88" y="438.4" width="1.47" height="29" fill="#444444"/><rect x="574.73" y="438.4" width="1.47" height="29" fill="#444444"/><rect x="586.57" y="438.4" width="1.47" height="29" fill="#444444"/><rect x="598.42" y="438.4" width="1.47" height="29" fill="#444444"/><rect x="610.26" y="438.4" width="1.47" height="29" fill="#444444"/><rect x="622.11" y="438.4" width="1.47" height="29" fill="#444444"/><rect x="633.95" y="438.4" width="1.47" height="29" fill="#444444"/><rect x="645.80" y="438.4" width="1.47" height="29" fill="#444444"/><rect x="657.64" y="438.4" width="1.47" height="29" fill="#444444"/><rect x="669.49" y="438.4" width="1.47" height="29" fill="#444444"/><rect x="681.33" y="438.4" width="1.47" height="29" fill="#444444"/><rect x="693.18" y="438.4" width="1.47" height="29" fill="#444444"/><rect x="705.02" y="438.4" width="1.47" height="29" fill="#444444"/><rect x="716.87" y="438.4" width="1.47" height="29" fill="#444444"/><rect x="728.71" y="438.4" width="1.47" height="29" fill="#444444"/><rect x="740.56" y="438.4" width="1.47" height="29" fill="#444444"/><rect x="752.40" y="438.4" width="1.47" height="29" fill="#444444"/><rect x="764.25" y="438.4" width="1.47" height="29" fill="#444444"/><rect x="776.09" y="438.4" width="1.47" height="29" fill="#444444"/>
<path d="M209.40,438.4V467.4M211.77,438.4V467.4M214.14,438.4V467.4M216.51,438.4V467.4M218.88,438.4V467.4M221.25,438.4V467.4M223.61,438.4V467.4M225.98,438.4V467.4M228.35,438.4V467.4M230.72,438.4V467.4M233.09,438.4V467.4M235.46,438.4V467.4M237.83,438.4V467.4M240.20,438.4V467.4M242.57,438.4V467.4M244.94,438.4V467.4M247.30,438.4V467.4M249.67,438.4V467.4M252.04,438.4V467.4M254.41,438.4V467.4M256.78,438.4V467.4M259.15,438.4V467.4M261.52,438.4V467.4M263.89,438.4V467.4M266.26,438.4V467.4M268.62,438.4V467.4M270.99,438.4V467.4M273.36,438.4V467.4M275.73,438.4V467.4M278.10,438.4V467.4M280.47,438.4V467.4M282.84,438.4V467.4M285.21,438.4V467.4M287.58,438.4V467.4M289.95,438.4V467.4M292.31,438.4V467.4M294.68,438.4V467.4M297.05,438.4V467.4M299.42,438.4V467.4M301.79,438.4V467.4M304.16,438.4V467.4M306.53,438.4V467.4M308.90,438.4V467.4M311.27,438.4V467.4M313.64,438.4V467.4M316.00,438.4V467.4M318.37,438.4V467.4M320.74,438.4V467.4M323.11,438.4V467.4M325.48,438.4V467.4M327.85,438.4V467.4M330.22,438.4V467.4M332.59,438.4V467.4M334.96,438.4V467.4M337.33,438.4V467.4M339.70,438.4V467.4M342.06,438.4V467.4M344.43,438.4V467.4M346.80,438.4V467.4M349.17,438.4V467.4M351.54,438.4V467.4M353.91,438.4V467.4M356.28,438.4V467.4M358.65,438.4V467.4M361.02,438.4V467.4M363.38,438.4V467.4M365.75,438.4V467.4M368.12,438.4V467.4M370.49,438.4V467.4M372.86,438.4V467.4M375.23,438.4V467.4M377.60,438.4V467.4M379.97,438.4V467.4M382.34,438.4V467.4M384.71,438.4V467.4M387.08,438.4V467.4M389.44,438.4V467.4M391.81,438.4V467.4M394.18,438.4V467.4M396.55,438.4V467.4M398.92,438.4V467.4M401.29,438.4V467.4M403.66,438.4V467.4M406.03,438.4V467.4M408.40,438.4V467.4M410.76,438.4V467.4M413.13,438.4V467.4M415.50,438.4V467.4M417.87,438.4V467.4M420.24,438.4V467.4M422.61,438.4V467.4M424.98,438.4V467.4M427.35,438.4V467.4M429.72,438.4V467.4M432.09,438.4V467.4M434.46,438.4V467.4M436.82,438.4V467.4M439.19,438.4V467.4M441.56,438.4V467.4M443.93,438.4V467.4M446.30,438.4V467.4M448.67,438.4V467.4M451.04,438.4V467.4M453.41,438.4V467.4M455.78,438.4V467.4M458.15,438.4V467.4M460.51,438.4V467.4M462.88,438.4V467.4M465.25,438.4V467.4M467.62,438.4V467.4M469.99,438.4V467.4M472.36,438.4V467.4M474.73,438.4V467.4M477.10,438.4V467.4M479.47,438.4V467.4M481.84,438.4V467.4M484.20,438.4V467.4M486.57,438.4V467.4M488.94,438.4V467.4M491.31,438.4V467.4M493.68,438.4V467.4M496.05,438.4V467.4M498.42,438.4V467.4M500.79,438.4V467.4M503.16,438.4V467.4M505.52,438.4V467.4M507.89,438.4V467.4M510.26,438.4V467.4M512.63,438.4V467.4M515.00,438.4V467.4M517.37,438.4V467.4M519.74,438.4V467.4M522.11,438.4V467.4M524.48,438.4V467.4M526.85,438.4V467.4M529.22,438.4V467.4M531.58,438.4V467.4M533.95,438.4V467.4M536.32,438.4V467.4M538.69,438.4V467.4M541.06,438.4V467.4M543.43,438.4V467.4M545.80,438.4V467.4M548.17,438.4V467.4M550.54,438.4V467.4M552.91,438.4V467.4M555.27,438.4V467.4M557.64,438.4V467.4M560.01,438.4V467.4M562.38,438.4V467.4M564.75,438.4V467.4M567.12,438.4V467.4M569.49,438.4V467.4M571.86,438.4V467.4M574.23,438.4V467.4M576.60,438.4V467.4M578.96,438.4V467.4M581.33,438.4V467.4M583.70,438.4V467.4M586.07,438.4V467.4M588.44,438.4V467.4M590.81,438.4V467.4M593.18,438.4V467.4M595.55,438.4V467.4M597.92,438.4V467.4M600.29,438.4V467.4M602.65,438.4V467.4M605.02,438.4V467.4M607.39,438.4V467.4M609.76,438.4V467.4M612.13,438.4V467.4M614.50,438.4V467.4M616.87,438.4V467.4M619.24,438.4V467.4M621.61,438.4V467.4M623.98,438.4V467.4M626.34,438.4V467.4M628.71,438.4V467.4M631.08,438.4V467.4M633.45,438.4V467.4M635.82,438.4V467.4M638.19,438.4V467.4M640.56,438.4V467.4M642.93,438.4V467.4M645.30,438.4V467.4M647.67,438.4V467.4M650.03,438.4V467.4M652.40,438.4V467.4M654.77,438.4V467.4M657.14,438.4V467.4M659.51,438.4V467.4M661.88,438.4V467.4M664.25,438.4V467.4M666.62,438.4V467.4M668.99,438.4V467.4M671.36,438.4V467.4M673.72,438.4V467.4M676.09,438.4V467.4M678.46,438.4V467.4M680.83,438.4V467.4M683.20,438.4V467.4M685.57,438.4V467.4M687.94,438.4V467.4M690.31,438.4V467.4M692.68,438.4V467.4M695.05,438.4V467.4M697.41,438.4V467.4M699.78,438.4V467.4M702.15,438.4V467.4M704.52,438.4V467.4M706.89,438.4V467.4M709.26,438.4V467.4M711.63,438.4V467.4M714.00,438.4V467.4M716.37,438.4V467.4M718.74,438.4V467.4M721.10,438.4V467.4M723.47,438.4V467.4M725.84,438.4V467.4M728.21,438.4V467.4M730.58,438.4V467.4M732.95,438.4V467.4M735.32,438.4V467.4M737.69,438.4V467.4M740.06,438.4V467.4M742.43,438.4V467.4M744.79,438.4V467.4M747.16,438.4V467.4M749.53,438.4V467.4M751.90,438.4V467.4M754.27,438.4V467.4M756.64,438.4V467.4M759.01,438.4V467.4M761.38,438.4V467.4M763.75,438.4V467.4M766.12,438.4V467.4M768.48,438.4V467.4M770.85,438.4V467.4M773.22,438.4V467.4M775.59,438.4V467.4" stroke="#3d3d3d" stroke-width="0.5"/>
<rect x="209.0" y="452.0" width="567.0" height="0.7" fill="#333"/>
<path d="M209.40,419V427.8M221.25,419V427.8M233.09,419V427.8M244.94,419V427.8M256.78,419V427.8M268.62,419V427.8M280.47,419V427.8M292.31,419V427.8M304.16,419V427.8M316.00,419V427.8M327.85,419V427.8M339.70,419V427.8M351.54,419V427.8M363.38,419V427.8M375.23,419V427.8M387.08,419V427.8M398.92,419V427.8M410.76,419V427.8M422.61,419V427.8M434.46,419V427.8M446.30,419V427.8M458.15,419V427.8M469.99,419V427.8M481.84,419V427.8M493.68,419V427.8M505.52,419V427.8M517.37,419V427.8M529.22,419V427.8M541.06,419V427.8M552.91,419V427.8M564.75,419V427.8M576.60,419V427.8M588.44,419V427.8M600.29,419V427.8M612.13,419V427.8M623.98,419V427.8M635.82,419V427.8M647.67,419V427.8M659.51,419V427.8M671.36,419V427.8M683.20,419V427.8M695.05,419V427.8M706.89,419V427.8M718.74,419V427.8M730.58,419V427.8M742.43,419V427.8M754.27,419V427.8M766.12,419V427.8" stroke="#474747" stroke-width="0.7"/>
<rect x="209.4" y="438.4" width="67.4" height="13.9" fill="#6d82d8"/>
<rect x="209.4" y="452.3" width="69.6" height="14.9" fill="#8a63b4"/>
<rect x="276.4" y="438.4" width="2.5" height="13.9" fill="#c9bd86"/>
<path d="M211,448.6 H274.5" stroke="#2a3050" stroke-width="0.55"/><path d="M273,447.2 l2.6,1.4 l-2.6,1.4Z" fill="#2a3050"/><circle cx="210.8" cy="448.6" r="1.1" fill="#111"/><circle cx="278" cy="448.6" r="1.1" fill="#111"/>
<path d="M211,463.2 H274.5" stroke="#2a3050" stroke-width="0.55"/><path d="M273,461.8 l2.6,1.4 l-2.6,1.4Z" fill="#2a3050"/><circle cx="210.8" cy="463.2" r="1.1" fill="#111"/><circle cx="278" cy="463.2" r="1.1" fill="#111"/>
<rect x="209.1" y="419.0" width="0.9" height="116.5" fill="#5a9ae6"/>
<rect x="208.6" y="418.6" width="1.9" height="19.6" fill="#5a9ae6" opacity="0.9"/>
<rect x="385.2" y="404.2" width="7.6" height="7.6" rx="0.6" fill="#e2e2e2"/>
<circle cx="389" cy="408.6" r="1.3" fill="#2c2c2c"/>
<rect x="403.0" y="404.2" width="7.6" height="7.6" rx="0.6" fill="#e2e2e2"/>
<circle cx="406.8" cy="408.6" r="1.4" fill="none" stroke="#2c2c2c" stroke-width="0.8"/>
<rect x="420.7" y="404.2" width="7.6" height="7.6" rx="0.6" fill="#e2e2e2"/>
<rect x="424.9" y="405.4" width="2.4" height="5.6" fill="#2c2c2c"/>
<rect x="438.8" y="404.6" width="7.6" height="7.6" rx="0.6" fill="#e2e2e2"/>
<rect x="443.4" y="407" width="2.4" height="2.6" fill="#2c2c2c"/><path d="M445,403.4 l1.4,1.6 h-2.8Z M448,412.6 l1.1,-1.1 v1.1Z" fill="#ddd"/>
<rect x="456.4" y="404.0" width="7.6" height="7.6" rx="0.6" fill="#e2e2e2"/>
<rect x="461.6" y="406" width="2.6" height="2.4" fill="#2c2c2c"/><circle cx="463.4" cy="410.6" r="2.7" fill="#e2e2e2" stroke="#303030" stroke-width="0.8"/><rect x="461.8" y="410.1" width="3.2" height="1" fill="#303030"/>
<rect x="470.1" y="401.0" width="0.9" height="14.5" fill="#4a4a4a"/>
<circle cx="479.4" cy="408" r="3.1" fill="#bdbdbd"/><circle cx="482.6" cy="408" r="3.3" fill="#e2e2e2" stroke="#303030" stroke-width="0.7"/><path d="M486,412.6 l1.1,-1.1 v1.1Z" fill="#ccc"/>
<path d="M496.0,410.6 h4.6 v-3.6 h-4.6Z M498.0,406 l2.4,-1.6 l2,1.6" stroke="#454545" stroke-width="0.9"/>
<path d="M514.0,410.6 h4.6 v-3.6 h-4.6Z M516.0,406 l2.4,-1.6 l2,1.6" stroke="#454545" stroke-width="0.9"/>
<path d="M532.0,410.6 h4.6 v-3.6 h-4.6Z M534.0,406 l2.4,-1.6 l2,1.6" stroke="#454545" stroke-width="0.9"/>
<rect x="545.1" y="401.0" width="0.9" height="14.5" fill="#4a4a4a"/>
<path d="M553.6,406.4 H551.8 V412 H559.4 V409.6" stroke="#e2e2e2" stroke-width="1.1"/><path d="M554.4,409 C554.4,406.4 556,405.6 558.6,405.6 M557.2,403.8 L559.2,405.6 L557.2,407.4" stroke="#e2e2e2" stroke-width="1"/>
<path d="M571.2,404 L578,408 L571.2,412Z" fill="#e2e2e2"/>
<path d="M691.8,406.8 C694.5,404.4 697.6,406.4 697.2,409.2" stroke="#e2e2e2" stroke-width="1.45"/>
<path d="M690.8,404.6 l-0.5,3.8 l3.8,-0.4Z" fill="#e2e2e2"/>
<rect x="690.5" y="410.3" width="7" height="1.4" fill="#e2e2e2"/>
<circle cx="708.6" cy="408" r="2.9" stroke="#e2e2e2" stroke-width="1"/>
<rect x="715.5" y="407.6" width="40" height="0.8" fill="#454545"/>
<path d="M766.6,411.4 L769.6,405.6 L771,408 L772.6,405 L775.8,411.4Z" fill="#e2e2e2"/>
<rect x="211" y="538.6" width="174" height="4" rx="1.8" fill="#c9c9c9"/>
</svg>
<div id="txt">
<span class="t" style="left:69.3px;top:6.2px;font-size:8.40px;color:#ececec;transform:scaleX(0.798);">Animate</span>
<span class="t" style="left:45.0px;top:24.0px;font-size:7.40px;color:#8c8c8c;font-weight:bold;transform:scaleX(0.909);">Untitled-1</span>
<span class="t" style="left:97.0px;top:24.0px;font-size:7.40px;color:#f0f0f0;font-weight:bold;transform:scaleX(0.946);">Untitled-2*</span>
<span class="t" style="left:64.0px;top:39.5px;font-size:7.60px;color:#ececec;transform:scaleX(0.800);">Scene 1</span>
<span class="t" style="left:739.5px;top:38.8px;font-size:7.40px;color:#ececec;font-weight:bold;transform:scaleX(0.810);">51%</span>
<span class="t" style="left:10.3px;top:212.2px;font-family:'Liberation Serif',serif;font-weight:bold;font-size:12.4px;color:#ececec">T</span>
<span class="t" style="left:793.3px;top:29.8px;font-size:7.40px;color:#7e7e7e;font-weight:bold;transform:scaleX(0.812);">Assets</span>
<span class="t" style="left:822.5px;top:29.8px;font-size:7.40px;color:#f2f2f2;font-weight:bold;transform:scaleX(0.847);">Properties</span>
<span class="t" style="left:862.0px;top:29.8px;font-size:7.40px;color:#7e7e7e;font-weight:bold;transform:scaleX(0.828);">Color</span>
<span class="t" style="left:888.0px;top:29.8px;font-size:7.40px;color:#7e7e7e;font-weight:bold;transform:scaleX(0.838);">Align</span>
<span class="t" style="left:912.5px;top:29.8px;font-size:7.40px;color:#7e7e7e;font-weight:bold;transform:scaleX(0.857);">Library</span>
<span class="t" style="left:822.3px;top:50.8px;font-size:7.80px;color:#e4e4e4;transform:scaleX(0.867);">Tool</span>
<span class="t" style="left:852.0px;top:50.8px;font-size:7.80px;color:#f4f4f4;transform:scaleX(0.869);">Object</span>
<span class="t" style="left:887.6px;top:50.8px;font-size:7.80px;color:#e4e4e4;transform:scaleX(0.816);">Frame</span>
<span class="t" style="left:924.0px;top:50.8px;font-size:7.80px;color:#e4e4e4;transform:scaleX(0.865);">Doc</span>
<span class="t" style="left:817.6px;top:72.0px;font-size:7.60px;color:#e4e4e4;transform:scaleX(0.864);">Warped Bitmap</span>
<span class="t" style="left:801.0px;top:84.5px;font-size:7.60px;color:#e4e4e4;transform:scaleX(0.840);">Instance of:</span>
<span class="t" style="left:840.0px;top:84.5px;font-size:7.60px;color:#e4e4e4;transform:scaleX(0.844);">WarpedAsset_1</span>
<span class="t" style="left:813.0px;top:129.0px;font-size:7.50px;color:#f0f0f0;font-weight:bold;transform:scaleX(0.821);">Position and Size</span>
<span class="t" style="left:801.0px;top:146.0px;font-size:7.50px;color:#e4e4e4;transform:scaleX(0.848);">W</span>
<span class="t" style="left:801.0px;top:159.6px;font-size:7.50px;color:#e4e4e4;transform:scaleX(0.923);">H</span>
<span class="t" style="left:820.8px;top:146.0px;font-size:7.40px;color:#6299dc;transform:scaleX(0.875);">1043</span>
<span class="t" style="left:820.4px;top:159.6px;font-size:7.40px;color:#6299dc;transform:scaleX(0.891);">603</span>
<span class="t" style="left:863.0px;top:146.0px;font-size:7.50px;color:#e4e4e4;transform:scaleX(0.919);">X</span>
<span class="t" style="left:863.0px;top:159.6px;font-size:7.50px;color:#e4e4e4;transform:scaleX(0.919);">Y</span>
<span class="t" style="left:880.6px;top:146.0px;font-size:7.40px;color:#6299dc;transform:scaleX(0.859);">709</span>
<span class="t" style="left:880.6px;top:159.6px;font-size:7.40px;color:#6299dc;transform:scaleX(0.839);">306.95</span>
<span class="t" style="left:813.0px;top:180.0px;font-size:7.50px;color:#f0f0f0;font-weight:bold;transform:scaleX(0.806);">Color Effects</span>
<span class="t" style="left:806.5px;top:197.5px;font-size:7.60px;color:#e4e4e4;transform:scaleX(0.859);">None</span>
<span class="t" style="left:813.0px;top:219.0px;font-size:7.50px;color:#f0f0f0;font-weight:bold;transform:scaleX(0.839);">Warp Options</span>
<span class="t" style="left:884.5px;top:230.0px;font-size:7.80px;color:#e8e8e8;transform:scaleX(0.879);">Reset warped asset</span>
<span class="t" style="left:820.0px;top:236.0px;font-size:7.60px;color:#e4e4e4;transform:scaleX(0.861);">Mesh</span>
<span class="t" style="left:820.0px;top:252.0px;font-size:7.60px;color:#e4e4e4;transform:scaleX(0.852);">Envelope</span>
<span class="t" style="left:801.0px;top:268.5px;font-size:7.60px;color:#e4e4e4;transform:scaleX(0.833);">Create bones</span>
<span class="t" style="left:801.0px;top:285.0px;font-size:7.60px;color:#e4e4e4;transform:scaleX(0.865);">Bone type</span>
<span class="t" style="left:877.0px;top:285.0px;font-size:7.60px;color:#e4e4e4;transform:scaleX(0.850);">Hard</span>
<span class="t" style="left:912.0px;top:285.0px;font-size:7.60px;color:#e4e4e4;transform:scaleX(0.843);">Soft</span>
<span class="t" style="left:944.0px;top:285.0px;font-size:7.60px;color:#e4e4e4;transform:scaleX(0.823);">Flexi</span>
<span class="t" style="left:801.0px;top:301.0px;font-size:7.60px;color:#e4e4e4;transform:scaleX(0.871);">Bone rotation</span>
<span class="t" style="left:947.0px;top:301.0px;font-size:7.40px;color:#6299dc;transform:scaleX(0.841);">-12</span>
<span class="t" style="left:801.0px;top:316.6px;font-size:7.60px;color:#e4e4e4;transform:scaleX(0.856);">Freeze joint</span>
<span class="t" style="left:801.0px;top:333.0px;font-size:7.60px;color:#e4e4e4;transform:scaleX(0.863);">Handle mode</span>
<span class="t" style="left:905.5px;top:333.0px;font-size:7.60px;color:#6a6a6a;transform:scaleX(0.807);">Fixed</span>
<span class="t" style="left:941.5px;top:333.0px;font-size:7.60px;color:#6a6a6a;transform:scaleX(0.839);">Open</span>
<span class="t" style="left:801.0px;top:349.6px;font-size:7.60px;color:#e4e4e4;transform:scaleX(0.825);">Propagate changes</span>
<span class="t" style="left:35.0px;top:385.7px;font-size:7.40px;color:#f2f2f2;font-weight:bold;transform:scaleX(0.870);">Timeline</span>
<span class="t" style="left:70.0px;top:385.7px;font-size:7.40px;color:#787878;font-weight:bold;transform:scaleX(0.866);">Output</span>
<span class="t" style="left:59.0px;top:439.5px;font-size:7.40px;color:#f4f4f4;transform:scaleX(0.819);">Stork_with_Baby</span>
<span class="t" style="left:59.0px;top:454.4px;font-size:7.40px;color:#dcdcdc;transform:scaleX(0.785);">Layer_1</span>
<span class="t" style="left:228.5px;top:403.6px;font-size:7.40px;color:#d8d8d8;transform:scaleX(0.886);">30.00</span>
<span class="t" style="left:248.0px;top:400.2px;font-size:5.40px;color:#b0b0b0;transform:scaleX(0.762);">FPS</span>
<span class="t" style="left:272.6px;top:403.8px;font-size:7.40px;color:#6299dc;transform:scaleX(0.632);">1</span>
<span class="t" style="left:279.0px;top:400.2px;font-size:6.40px;color:#e0e0e0;transform:scaleX(0.819);">F</span>
<span class="t" style="left:279.3px;top:417.4px;font-size:5.80px;color:#b4b4b4;transform:scaleX(0.816);">1s</span>
<span class="t" style="left:350.3px;top:417.4px;font-size:5.80px;color:#b4b4b4;transform:scaleX(0.816);">2s</span>
<span class="t" style="left:421.4px;top:417.4px;font-size:5.80px;color:#b4b4b4;transform:scaleX(0.816);">3s</span>
<span class="t" style="left:492.5px;top:417.4px;font-size:5.80px;color:#b4b4b4;transform:scaleX(0.816);">4s</span>
<span class="t" style="left:563.5px;top:417.4px;font-size:5.80px;color:#b4b4b4;transform:scaleX(0.816);">5s</span>
<span class="t" style="left:634.6px;top:417.4px;font-size:5.80px;color:#b4b4b4;transform:scaleX(0.816);">6s</span>
<span class="t" style="left:705.7px;top:417.4px;font-size:5.80px;color:#b4b4b4;transform:scaleX(0.816);">7s</span>
<span class="t" style="left:230.7px;top:427.8px;font-size:6.20px;color:#b8b8b8;transform:scaleX(0.986);">10</span>
<span class="t" style="left:254.4px;top:427.8px;font-size:6.20px;color:#b8b8b8;transform:scaleX(0.986);">20</span>
<span class="t" style="left:278.1px;top:427.8px;font-size:6.20px;color:#b8b8b8;transform:scaleX(0.986);">30</span>
<span class="t" style="left:301.8px;top:427.8px;font-size:6.20px;color:#b8b8b8;transform:scaleX(0.986);">40</span>
<span class="t" style="left:325.5px;top:427.8px;font-size:6.20px;color:#b8b8b8;transform:scaleX(0.986);">50</span>
<span class="t" style="left:349.1px;top:427.8px;font-size:6.20px;color:#b8b8b8;transform:scaleX(0.986);">60</span>
<span class="t" style="left:372.8px;top:427.8px;font-size:6.20px;color:#b8b8b8;transform:scaleX(0.986);">70</span>
<span class="t" style="left:396.5px;top:427.8px;font-size:6.20px;color:#b8b8b8;transform:scaleX(0.986);">80</span>
<span class="t" style="left:420.2px;top:427.8px;font-size:6.20px;color:#b8b8b8;transform:scaleX(0.986);">90</span>
<span class="t" style="left:443.9px;top:427.8px;font-size:6.20px;color:#b8b8b8;transform:scaleX(1.005);">100</span>
<span class="t" style="left:467.6px;top:427.8px;font-size:6.20px;color:#b8b8b8;transform:scaleX(1.052);">110</span>
<span class="t" style="left:491.3px;top:427.8px;font-size:6.20px;color:#b8b8b8;transform:scaleX(1.005);">120</span>
<span class="t" style="left:515.0px;top:427.8px;font-size:6.20px;color:#b8b8b8;transform:scaleX(1.005);">130</span>
<span class="t" style="left:538.7px;top:427.8px;font-size:6.20px;color:#b8b8b8;transform:scaleX(1.005);">140</span>
<span class="t" style="left:562.4px;top:427.8px;font-size:6.20px;color:#b8b8b8;transform:scaleX(1.005);">150</span>
<span class="t" style="left:586.0px;top:427.8px;font-size:6.20px;color:#b8b8b8;transform:scaleX(1.005);">160</span>
<span class="t" style="left:609.7px;top:427.8px;font-size:6.20px;color:#b8b8b8;transform:scaleX(1.005);">170</span>
<span class="t" style="left:633.4px;top:427.8px;font-size:6.20px;color:#b8b8b8;transform:scaleX(1.005);">180</span>
<span class="t" style="left:657.1px;top:427.8px;font-size:6.20px;color:#b8b8b8;transform:scaleX(1.005);">190</span>
<span class="t" style="left:680.8px;top:427.8px;font-size:6.20px;color:#b8b8b8;transform:scaleX(1.005);">200</span>
<span class="t" style="left:704.5px;top:427.8px;font-size:6.20px;color:#b8b8b8;transform:scaleX(1.005);">210</span>
<span class="t" style="left:728.2px;top:427.8px;font-size:6.20px;color:#b8b8b8;transform:scaleX(1.005);">220</span>
<span class="t" style="left:751.9px;top:427.8px;font-size:6.20px;color:#b8b8b8;transform:scaleX(1.005);">230</span>
</div>
</body></html>
